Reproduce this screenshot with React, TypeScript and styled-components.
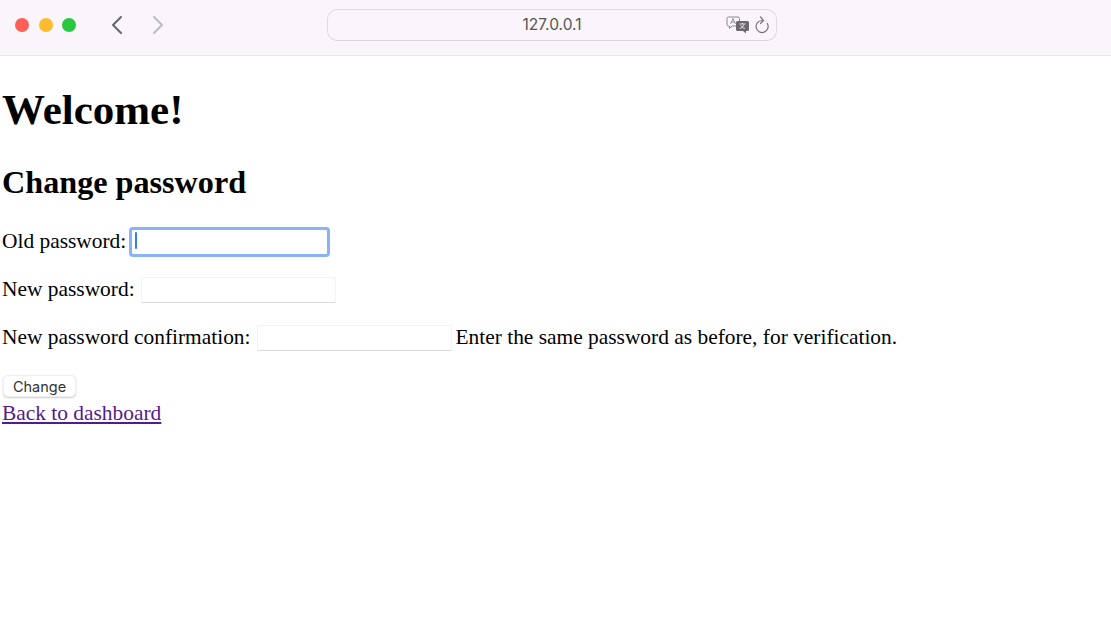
import React from "react";
import styled, { createGlobalStyle } from "styled-components";

const Global = createGlobalStyle`
  html, body {
    margin: 0;
    padding: 0;
    background: #fff;
    overflow: hidden;
  }
  body {
    font-family: "Liberation Serif", "Times New Roman", serif;
    font-size: 21.42px;
    color: #000;
  }
`;

const Toolbar = styled.header`
  height: 56px;
  box-sizing: border-box;
  display: grid;
  grid-template-columns: 1fr 450px 1fr;
  align-items: center;
  padding: 0 15px 6px;
  background: #f9f5fb;
  border-bottom: 1px solid #ebe8ed;
`;

const LeftControls = styled.div`
  display: flex;
  align-items: center;
`;

const Lights = styled.div`
  display: flex;
  gap: 9.5px;
  margin-right: 34px;
`;

const Light = styled.span<{ color: string }>`
  width: 14px;
  height: 14px;
  border-radius: 50%;
  background: ${({ color }) => color};
`;

const NavIcon = styled.svg`
  width: 14px;
  height: 20px;
  margin-right: 27px;
  fill: none;
  stroke-width: 2;
  stroke-linecap: round;
  stroke-linejoin: round;
`;

const AddressBar = styled.div`
  height: 32px;
  box-sizing: border-box;
  margin-left: -4px;
  margin-right: 4px;
  padding-left: 1px;
  position: relative;
  display: flex;
  align-items: center;
  justify-content: center;
  border: 1px solid #dedbe1;
  border-bottom-color: #d8d5db;
  border-radius: 10px;
  font-family: Inter, "Liberation Sans", sans-serif;
  font-size: 15.5px;
  color: #555;
`;

const BarIcons = styled.div`
  position: absolute;
  right: 6px;
  top: 5px;
  display: flex;
  align-items: center;
  gap: 4px;
`;

const Page = styled.main`
  padding: 0 2px;
`;

const Title = styled.h1`
  font-size: 43px;
  line-height: 49px;
  margin: 29px 0 0;
  font-weight: bold;
`;

const Subtitle = styled.h2`
  font-size: 32.2px;
  line-height: 37px;
  margin: 30px 0 0;
  font-weight: bold;
`;

const Form = styled.form`
  margin: 27px 0 0;
`;

const Row = styled.p`
  display: flex;
  align-items: center;
  margin: 0 0 22px;
  height: 26px;
  white-space: pre;
`;

const Field = styled.input`
  box-sizing: border-box;
  width: 195px;
  height: 26px;
  margin: 2px 4px 0 6px;
  padding: 0 4px;
  background: #fff;
  outline: none;
  border: 1px solid #f3f3f3;
  border-bottom-color: #dcdcdc;
  border-radius: 1px;
`;

const FocusedField = styled(Field)`
  width: 201px;
  height: 30px;
  margin: 2px 0 0 2.5px;
  border: 3px solid #8ab2f6;
  border-radius: 4px;
  caret-color: #0a6cff;
`;

const Caret = styled.span`
  position: absolute;
  left: 8.5px;
  top: 7px;
  width: 2px;
  height: 17px;
  background: #2f80f6;
  border-radius: 1px;
`;

const FieldWrap = styled.span`
  position: relative;
  display: inline-flex;
`;

const SubmitButton = styled.button`
  display: block;
  box-sizing: border-box;
  width: 73px;
  height: 22px;
  padding: 0;
  margin: 25px 0 4px 1px;
  background: #fff;
  border: 1px solid #f0f0f0;
  border-radius: 5px;
  box-shadow: 0 1px 2px rgba(0, 0, 0, 0.2);
  font-family: Inter, "Liberation Sans", sans-serif;
  font-size: 14.5px;
  color: #333;
`;

const BackLink = styled.a`
  color: #551a8b;
  text-decoration: underline;
`;

const TranslateIcon = () => (
  <svg width="24" height="18" viewBox="0 0 24 18">
    <path
      d="M2.5 1h9.5a1.500 1.500 0 0 1 1.500 1.500v6a1.500 1.500 0 0 1-1.500 1.500H6l-2.500 2.500V10h-1A1.500 1.500 0 0 1 1 8.500v-6A1.500 1.500 0 0 1 2.500 1z"
      fill="none"
      stroke="#8a888c"
      strokeWidth="1"
    />
    <path d="M4.500 8l2.500-5.500L9.500 8M5.500 6h3" fill="none" stroke="#8a888c" strokeWidth="0.9" />
    <path
      d="M11.500 5h10A1.500 1.500 0 0 1 23 6.500v7a1.500 1.500 0 0 1-1.500 1.500H20v2.500L17 15h-5.500a1.500 1.500 0 0 1-1.500-1.500v-7A1.500 1.500 0 0 1 11.500 5z"
      fill="#6b696d"
    />
    <path d="M13.500 8h6M16.500 7v1M18 8.500c-.8 2-2.300 3.500-4.300 4M14.800 9.500c.8 1.500 2 2.500 4 3" fill="none" stroke="#f2eff4" strokeWidth="0.9" />
  </svg>
);

const ReloadIcon = () => (
  <svg width="16" height="20" viewBox="0 0 16 20" fill="none" stroke="#77757a" strokeWidth="1.200" strokeLinecap="round" strokeLinejoin="round">
    <path d="M8 5.500a6 6 0 1 0 5.300 3" />
    <path d="M6.500 2l3 3.500-3 3" />
  </svg>
);

export default function App() {
  return (
    <>
      <Global />
      <Toolbar>
        <LeftControls>
          <Lights>
            <Light color="#fe5f57" />
            <Light color="#febc2e" />
            <Light color="#28c840" />
          </Lights>
          <NavIcon viewBox="0 0 14 20" stroke="#68666b">
            <path d="M11 2L3 10l8 8" />
          </NavIcon>
          <NavIcon viewBox="0 0 14 20" stroke="#bdbbc0">
            <path d="M3 2l8 8-8 8" />
          </NavIcon>
        </LeftControls>
        <AddressBar>
          127.0.0.1
          <BarIcons>
            <TranslateIcon />
            <ReloadIcon />
          </BarIcons>
        </AddressBar>
      </Toolbar>
      <Page>
        <Title>Welcome!</Title>
        <Subtitle>Change password</Subtitle>
        <Form>
          <Row>
            Old password:
            <FieldWrap>
              <FocusedField type="password" />
              <Caret />
            </FieldWrap>
          </Row>
          <Row>
            New password:
            <Field type="password" />
          </Row>
          <Row>
            New password confirmation:
            <Field type="password" />
            Enter the same password as before, for verification.
          </Row>
          <SubmitButton type="button">Change</SubmitButton>
        </Form>
        <BackLink href="#">Back to dashboard</BackLink>
      </Page>
    </>
  );
}
